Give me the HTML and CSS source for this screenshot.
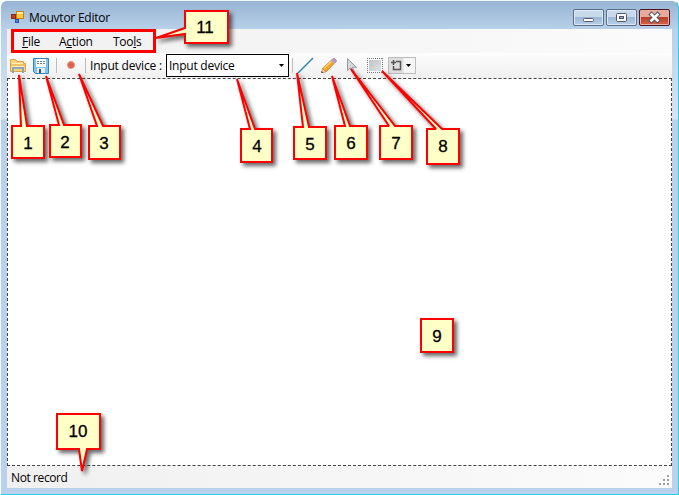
FILE: index.html
```html
<!DOCTYPE html>
<html lang="en">
<head>
<meta charset="utf-8">
<title>Mouvtor Editor</title>
<link rel="stylesheet" href="styles.css">
</head>
<body>
<div class="window">
  <header class="titlebar">
    <svg class="app-icon" width="14" height="14" viewBox="0 0 14 14">
      <rect x=".5" y="4.500" width="4" height="4" fill="#c63a16" stroke="#8c2b16"/>
      <rect x="5.500" y="1.500" width="7" height="7" fill="#ffc83d" stroke="#c38212"/>
      <path d="M6 3h6" stroke="#ffe9a0" stroke-width="2"/>
      <rect x="4.500" y="9.500" width="3" height="3" fill="#4c83e8" stroke="#2853a4"/>
    </svg>
    <h1 class="title">Mouvtor Editor</h1>
    <div class="controls">
      <span class="control"><svg width="29" height="15"><rect x="9.500" y="8.500" width="10" height="3" rx="1" fill="#fff" stroke="#535666"/></svg></span>
      <span class="control"><svg width="29" height="15"><rect x="9.500" y="3.500" width="10" height="8" rx="1" fill="#fff" stroke="#535666"/><rect x="12.500" y="6.500" width="4" height="2" fill="#8eaccd" stroke="#535666"/></svg></span>
      <span class="control close"><svg width="29" height="15"><path d="M11.500 4.500l6 6M17.500 4.500l-6 6" stroke="#535666" stroke-width="4.500" stroke-linecap="square"/><path d="M11.500 4.500l6 6M17.500 4.500l-6 6" stroke="#fff" stroke-width="2.600" stroke-linecap="square"/></svg></span>
    </div>
  </header>
  <div class="client">
    <nav class="menubar">
      <span class="menu-file"><u>F</u>ile</span>
      <span class="menu-action">A<u>c</u>tion</span>
      <span class="menu-tools">Too<u>l</u>s</span>
    </nav>
    <div class="toolbar">
      <svg class="tool folder" width="16" height="16" viewBox="0 0 16 16">
        <path d="M.5 13.500V1.500h5l1.500 2h6.500v2h2v8z" fill="#fbd578" stroke="#dfa545"/>
        <path d="M2 5.500h11M2 8.500h12" stroke="#fff0b8"/>
        <path d="M1 7h14" stroke="#e2ad4f"/>
        <path d="M3 15V10h10v5" fill="none" stroke="#8fa3ba" stroke-width="2"/>
      </svg>
      <svg class="tool save" width="16" height="16" viewBox="0 0 16 16">
        <path d="M.5.500h15v15h-13l-2-2z" fill="#7cc4ef" stroke="#3187bd"/>
        <path d="M3 1h10v8H3z" fill="#fff"/>
        <path d="M4 3.500h8M4 5.500h8" stroke="#7d8186" stroke-dasharray="2 1"/>
        <path d="M4 10h8v5H4z" fill="#e6ecf0"/>
        <path d="M6 11h2v4H6z" fill="#3d5267"/>
      </svg>
      <i class="separator sep-one"></i>
      <i class="record"></i>
      <i class="separator sep-two"></i>
      <span class="device-label">Input device :</span>
      <div class="combo"><span>Input device</span><i class="arrow"></i></div>
      <i class="separator sep-three"></i>
      <svg class="tool line" width="17" height="17" viewBox="0 0 17 17"><path d="M1 16L16 1" stroke="#2d83b8" stroke-width="1.500"/></svg>
      <svg class="tool pencil" width="16" height="16" viewBox="0 0 16 16">
        <path d="M1.500 10.500L10.500 2l3 3-8.500 9z" fill="#f9a01f" stroke="#c98028" stroke-width=".8"/>
        <path d="M3 10.500L11 3" stroke="#ffd675" stroke-width="1.300"/>
        <path d="M.500 14.700l1-4.200L5 14z" fill="#f5d9a8" stroke="#a87538" stroke-width=".5"/>
        <path d="M.500 15v-2l2 1.500z" fill="#333"/>
        <path d="M11 1.500l1-1q1-.7 2.500.7t.7 2.600L14 5z" fill="#c797c6" stroke="#9a74a3" stroke-width=".6"/>
        <path d="M10.300 2.200l3 3" stroke="#aab4b8" stroke-width="1.500"/>
      </svg>
      <svg class="tool pointer" width="11" height="16" viewBox="0 0 11 16"><path d="M.5.800v11.700l2.800-2.500 2 4.500 2-1-2-4.200h4.200z" fill="#d5d8da" stroke="#96999c"/></svg>
      <svg class="tool selection" width="16" height="15" viewBox="0 0 16 15">
        <defs><linearGradient id="grey" x2="1" y2="1"><stop stop-color="#c0c3c6"/><stop offset="1" stop-color="#e0e1e2"/></linearGradient></defs>
        <path d="M0 0h16v15H0z" fill="#fff"/>
        <path d="M0 .5h16M0 14.500h16M.5 0v15M15.500 0v15" stroke="#777" stroke-dasharray="1 1"/><rect x="2" y="2" width="12" height="11" fill="url(#grey)"/>
      </svg>
      <div class="split">
        <svg width="12" height="13" viewBox="0 0 12 13"><path d="M5 2.500h4.500v8H2.500V7M0 3.500h5M2.500 1v5" fill="none" stroke="#555" stroke-width="1.500"/></svg>
        <i class="arrow"></i>
      </div>
    </div>
    <main class="canvas"></main>
    <footer class="status"><span>Not record</span>
      <svg class="grip" width="10" height="10" fill="#a0a0a0"><path d="M8 0h2v2H8zM4 4h2v2H4zM8 4h2v2H8zM0 8h2v2H0zM4 8h2v2H4zM8 8h2v2H8z"/></svg>
    </footer>
  </div>
</div>
<svg class="annotations" width="679" height="495" viewBox="0 0 679 495">
  <rect class="menu-outline" x="12.500" y="30.500" width="142" height="21"/>
  <g class="callouts">
    <path d="M12 126H21L19 75L27 126H44V158H12z"/>
    <path d="M50 125H59L46 76L64 125H81V157H50z"/>
    <path d="M89 126H97L79 74L103 126H120V159H89z"/>
    <path d="M241 129H250L237 79L255 129H272V162H241z"/>
    <path d="M294 127H303L297 73L309 127H326V159H294z"/>
    <path d="M335 126H345L332 76L350 126H367V159H335z"/>
    <path d="M380 126H389L351 69L395 126H412V159H380z"/>
    <path d="M427 129H436L382 71L442 129H459V164H427z"/>
    <path d="M421 319H453V352H421z"/>
    <path d="M57 414H100V449H87L82 471L79 449H57z"/>
    <path d="M185 11H228V43H185V34L156 38L185 28z"/>
  </g>
  <g class="numbers">
    <text x="28" y="149">1</text><text x="65" y="148">2</text><text x="104" y="149">3</text>
    <text x="257" y="152">4</text><text x="310" y="150">5</text><text x="351" y="149">6</text>
    <text x="396" y="149">7</text><text x="443" y="152">8</text><text x="437" y="342">9</text>
    <text x="78" y="437">10</text><text x="205" y="33">11</text>
  </g>
</svg>
</body>
</html>
```
FILE: styles.css
```css
* { box-sizing: border-box; }
body { margin: 0; overflow: hidden; background: #fff; color: #000; font: 12px "Open Sans", "Noto Sans", sans-serif; }
.window { height: 495px; padding: 0 5px 6px 6px; border: 1px solid #25cfe4; border-top-color: #eef6fa; border-left-color: #f5fbff; border-radius: 7px 7px 0 0; background: linear-gradient(#98b4d3, #b9d1ea 29px, #d6e4f3 118px, #b9d1ea 119px); }
.titlebar { display: flex; align-items: flex-start; height: 28px; padding-left: 4px; }
.app-icon { margin-top: 9px; flex: none; }
.title { margin: 8px 0 0 4px; font-size: 12px; line-height: 18px; font-weight: 400; letter-spacing: -.25px; }
.controls { display: flex; gap: 2px; margin: 8px 3px 0 auto; }
.control { width: 31px; height: 17px; border: 1px solid #59708b; border-radius: 2px; background: linear-gradient(#c8d9eb 45%, #9db8d5 50%, #b9d0e8); box-shadow: inset 0 0 0 1px #dbe8f5; }
.control svg { display: block; }
.close { border-color: #4a1521; background: linear-gradient(#e9a99b 45%, #bb3f25 50%, #d7654b); box-shadow: inset 0 0 0 1px #e9afa4; }
.client { height: 459px; width: 665px; display: flex; flex-direction: column; }
.menubar { height: 24px; display: flex; align-items: center; background: linear-gradient(90deg, #f0f0f0, #fbfbfb); padding-left: 15px; letter-spacing: -.25px; }
.menubar u { text-decoration-thickness: 1px; text-underline-offset: 1px; }
.menu-file { width: 37px; }
.menu-action { width: 54px; }
.toolbar { height: 25px; display: flex; align-items: center; padding-left: 3px; background: linear-gradient(#fdfdfd, #f0f0f0); }
.tool { flex: none; }
.save { margin-left: 7px; }
.separator { width: 1px; height: 15px; background: #bdbdbd; flex: none; }
.sep-one { margin-left: 7px; }
.record { width: 8px; height: 8px; margin: -1px 0 0 10px; border: 1px solid #ee927c; border-radius: 50%; background: #dd604c; flex: none; }
.sep-two { margin-left: 10px; }
.device-label { width: 76px; margin-left: 4px; letter-spacing: -.2px; white-space: nowrap; }
.combo { width: 123px; height: 23px; border: 1px solid #000; background: #fff; padding: 0 4px 0 2px; display: flex; align-items: center; justify-content: space-between; letter-spacing: -.25px; }
.arrow { width: 5px; height: 3px; background: #000; clip-path: polygon(0 0, 100% 0, 50% 100%); }
.sep-three { margin-left: 3px; }
.line { margin-left: 4px; }
.pencil { margin-left: 7px; }
.pointer { margin-left: 10px; }
.selection { margin-left: 9px; }
.split { display: flex; align-items: center; margin-left: 5px; width: 28px; height: 17px; padding: 0 4px 0 2px; justify-content: space-between; border: 1px solid #bcbcbc; background: linear-gradient(90deg, #dedede 14px, #f5f5f5 15px); }
.canvas { flex: 1; border: 1px dashed #444; background: #fff; }
.status { height: 22px; display: flex; justify-content: space-between; align-items: center; padding: 0 3px 0 4px; background: linear-gradient(90deg, #f0f0f0, #fbfbfb); letter-spacing: -.4px; }
.grip { align-self: flex-end; margin-bottom: 3px; }
.annotations { position: absolute; left: 0; top: 0; }
.menu-outline { fill: none; stroke: #f00; stroke-width: 3px; }
.callouts path { fill: #ffffc8; stroke: #f00; stroke-width: 2px; stroke-miterlimit: 2; filter: drop-shadow(3px 3px 2px #0009); }
.numbers { font: 17px "Liberation Sans", Arial, sans-serif; text-anchor: middle; fill: #000; stroke: #000; stroke-width: .3px; }
```
